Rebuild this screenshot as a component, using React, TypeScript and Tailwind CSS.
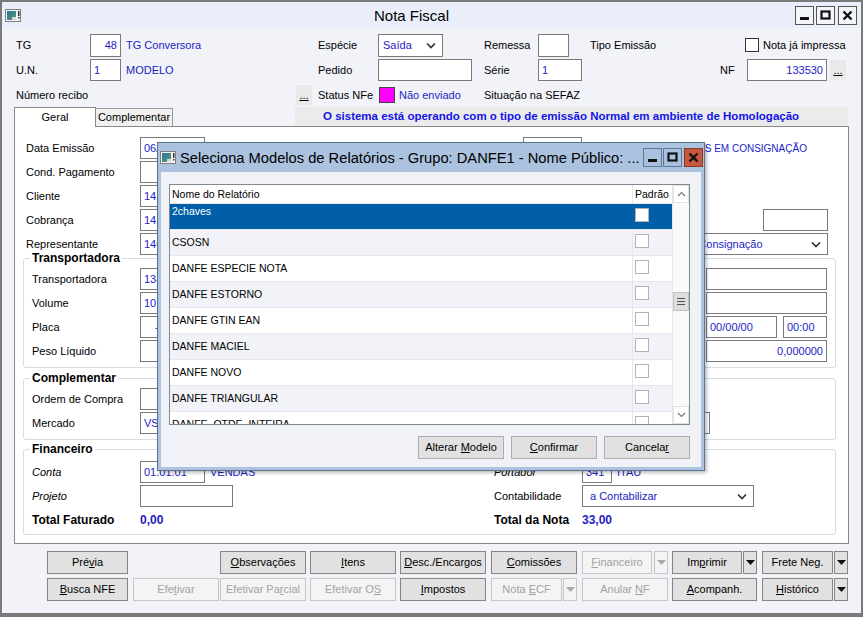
import React from "react";

type P = { w: string; h?: string; right?: boolean; className?: string; children?: React.ReactNode };

function Box({ w, h = "h-[22px]", right, className = "", children }: P) {
  return (
    <div
      className={`${w} ${h} shrink-0 border border-[#7a7a7a] bg-white flex items-center px-[3px] text-[#1d1dc4] overflow-hidden whitespace-nowrap ${
        right ? "justify-end" : ""
      } ${className}`}
    >
      {children}
    </div>
  );
}

function Chev() {
  return (
    <svg width="10" height="7" viewBox="0 0 10 7" className="shrink-0">
      <path d="M1 1.5 L5 5.5 L9 1.5" fill="none" stroke="#333" strokeWidth="1.7" />
    </svg>
  );
}

function Sel({ w, h = "h-[22px]", className = "", children }: P) {
  return (
    <div
      className={`${w} ${h} shrink-0 border border-[#7a7a7a] bg-white flex items-center pr-[6px] text-[#1d1dc4] overflow-hidden whitespace-nowrap ${className}`}
    >
      <span className="flex-1 overflow-hidden">{children}</span>
      <Chev />
    </div>
  );
}

function L({ w, className = "", children }: P) {
  return <div className={`${w} shrink-0 whitespace-nowrap ${className}`}>{children}</div>;
}

function WinIcon({ id }: { id: string }) {
  return (
    <svg width="16" height="13" viewBox="0 0 16 13" className="shrink-0">
      <defs>
        <linearGradient id={id} x1="0" y1="0" x2="1" y2="1">
          <stop offset="0" stopColor="#2f6f9f" />
          <stop offset="1" stopColor="#4fa36a" />
        </linearGradient>
      </defs>
      <rect x="0.5" y="0.5" width="15" height="12" fill="#f4f4f4" stroke="#7f7f7f" />
      <rect x="2" y="2" width="9" height="9" fill={`url(#${id})`} />
      <rect x="7" y="8" width="4" height="3" fill="#d8d8d8" />
      <rect x="13" y="2" width="1.5" height="5" fill="#333" />
      <rect x="13" y="8" width="1.5" height="1.5" fill="#333" />
    </svg>
  );
}

function Ctl({ kind, tone = "main" }: { kind: "min" | "max" | "close"; tone?: "main" | "dlg" | "red" }) {
  const cls =
    tone === "main"
      ? "bg-[#f3f5f9] border-[#555]"
      : tone === "dlg"
      ? "bg-[#a9c1de] border-[#5f7898]"
      : "bg-[#c9573f] border-[#8a3a2a]";
  return (
    <div className={`w-[19px] h-[19px] border ${cls} flex items-center justify-center`}>
      <svg width="17" height="17" viewBox="0 0 17 17">
        {kind === "min" && <rect x="4" y="10" width="9" height="3" fill="#111" />}
        {kind === "max" && <rect x="4.5" y="4.5" width="8" height="7" fill="none" stroke="#111" strokeWidth="2.2" />}
        {kind === "close" && (
          <path d="M4.5 4.5 L12.5 12.5 M12.5 4.5 L4.5 12.5" stroke="#111" strokeWidth="2.4" />
        )}
      </svg>
    </div>
  );
}

function Btn({
  className = "",
  disabled,
  children,
}: {
  className?: string;
  disabled?: boolean;
  children: React.ReactNode;
}) {
  return (
    <div
      className={`h-[23px] shrink-0 border flex items-center justify-center whitespace-nowrap ${
        disabled ? "bg-[#f4f4f4] border-[#c6c6c6] text-[#a2a2a2]" : "bg-[#e1e1e1] border-[#858585] text-black"
      } ${className}`}
    >
      {children}
    </div>
  );
}

function Arrow({ className = "", disabled }: { className?: string; disabled?: boolean }) {
  return (
    <div
      className={`w-[14px] h-[23px] shrink-0 border flex items-center justify-center ${
        disabled ? "bg-[#f4f4f4] border-[#c6c6c6]" : "bg-[#e1e1e1] border-[#858585]"
      } ${className}`}
    >
      <svg width="9" height="5" viewBox="0 0 9 5">
        <path d="M0 0 H9 L4.5 5 Z" fill={disabled ? "#a8a8a8" : "#111"} />
      </svg>
    </div>
  );
}

function Dots({ className = "" }: { className?: string }) {
  return (
    <div className={`w-[16px] h-[20px] shrink-0 bg-[#e9e9e9] flex items-center justify-center underline ${className}`}>
      ...
    </div>
  );
}

const rows = [
  "2chaves",
  "CSOSN",
  "DANFE ESPECIE NOTA",
  "DANFE ESTORNO",
  "DANFE GTIN EAN",
  "DANFE MACIEL",
  "DANFE NOVO",
  "DANFE TRIANGULAR",
  "DANFE_QTDE_INTEIRA",
];

function Dialog() {
  return (
    <div className="absolute left-[155px] top-[140px] w-[548px] h-[329px] border border-[#5a7394] bg-[#abc3df] shadow-[2px_2px_3px_rgba(0,0,0,0.25)] flex flex-col">
      <div className="h-[29px] shrink-0 flex items-center pl-[2px] pr-[1px]">
        <WinIcon id="g2" />
        <span className="ml-[4px] text-[14.7px] leading-[18px] text-black whitespace-nowrap">
          Seleciona Modelos de Relatórios - Grupo: DANFE1 - Nome Público: ...
        </span>
        <div className="ml-auto flex gap-[1px] shrink-0">
          <Ctl kind="min" tone="dlg" />
          <Ctl kind="max" tone="dlg" />
          <div className="ml-[1px]">
            <Ctl kind="close" tone="red" />
          </div>
        </div>
      </div>
      <div className="flex-1 mx-[3px] mb-[3px] bg-[#f0f2f7] pl-[8px] pt-[12px]">
        <div className="w-[521px] h-[241px] border border-[#828790] bg-white flex">
          <div className="flex-1 flex flex-col overflow-hidden">
            <div className="h-[19px] shrink-0 flex border-b border-[#e4e6ea] text-[10.5px]">
              <div className="flex-1 pl-[2px] flex items-center">Nome do Relatório</div>
              <div className="w-[40px] border-l border-[#e4e6ea] pl-[2px] flex items-center">Padrão</div>
            </div>
            {rows.map((r, i) => {
              const sel = i === 0;
              const bg = sel ? "bg-[#005fa8] text-white" : i % 2 === 1 ? "bg-[#f1f3f8]" : "bg-white";
              return (
                <div key={r} className={`h-[26px] shrink-0 flex border-b border-[#e4e6ec] text-[10.5px] ${bg}`}>
                  <div className={`flex-1 pl-[2px] flex ${sel ? "items-start pt-[1px]" : "items-center"}`}>{r}</div>
                  <div className={`w-[40px] pl-[2px] pt-[4px] border-l ${sel ? "border-[#005fa8]" : "border-[#e4e6ec]"}`}>
                    <div className="w-[14px] h-[14px] border border-[#b3b3b3] bg-white" />
                  </div>
                </div>
              );
            })}
          </div>
          <div className="w-[17px] shrink-0 flex flex-col bg-[#fafafa] border-l border-[#e6e6e6]">
            <div className="h-[18px] shrink-0 border border-[#e2e2e2] bg-white flex items-center justify-center">
              <svg width="9" height="6" viewBox="0 0 9 6">
                <path d="M1 5 L4.5 1.5 L8 5" fill="none" stroke="#777" strokeWidth="1.2" />
              </svg>
            </div>
            <div className="flex-1">
              <div className="mt-[89px] h-[19px] bg-[#dedede] border border-[#c2c2c2] flex flex-col items-center justify-center gap-[2px]">
                <div className="w-[8px] h-px bg-[#555]" />
                <div className="w-[8px] h-px bg-[#555]" />
                <div className="w-[8px] h-px bg-[#555]" />
              </div>
            </div>
            <div className="h-[18px] shrink-0 border border-[#e2e2e2] bg-white flex items-center justify-center">
              <svg width="9" height="6" viewBox="0 0 9 6">
                <path d="M1 1 L4.5 4.5 L8 1" fill="none" stroke="#777" strokeWidth="1.2" />
              </svg>
            </div>
          </div>
        </div>
        <div className="flex justify-end gap-[7px] mt-[11px] pr-[11px] text-[11px]">
          <div className="w-[86px] h-[23px] bg-[#e1e1e1] border border-[#adadad] flex items-center justify-center">
            Alterar&nbsp;<u>M</u>odelo
          </div>
          <div className="w-[86px] h-[23px] bg-[#e1e1e1] border border-[#adadad] flex items-center justify-center">
            <u>C</u>onfirmar
          </div>
          <div className="w-[86px] h-[23px] bg-[#e1e1e1] border border-[#adadad] flex items-center justify-center">
            Cancela<u>r</u>
          </div>
        </div>
      </div>
    </div>
  );
}

export default function App() {
  return (
    <div className="w-[863px] h-[617px] relative overflow-hidden bg-[#f1f3f8] border-2 border-b-4 border-[#7a7a7a] text-[11px] text-black font-['Liberation_Sans',Arial,sans-serif] leading-[13px]">
      {/* title bar */}
      <div className="h-[26px] bg-[#e9eefa] flex items-center">
        <div className="ml-[3px]">
          <WinIcon id="g1" />
        </div>
        <span className="ml-[353px] text-[15px]">Nota Fiscal</span>
        <div className="ml-auto mr-[4px] flex gap-[2px]">
          <Ctl kind="min" />
          <Ctl kind="max" />
          <div className="ml-[1px]">
            <Ctl kind="close" />
          </div>
        </div>
      </div>

      {/* header fields */}
      <div className="pl-[14px] pt-[5px]">
        <div className="flex items-center h-[24px]">
          <L w="w-[74px]">TG</L>
          <Box w="w-[31px]" h="h-[23px]" right>48</Box>
          <L w="w-[192px]" className="ml-[5px] text-[#1d1dc4]">TG Conversora</L>
          <L w="w-[60px]">Espécie</L>
          <Sel w="w-[65px]" h="h-[23px]" className="pl-[4px]">Saída</Sel>
          <L w="w-[54px]" className="ml-[41px]">Remessa</L>
          <Box w="w-[31px]" h="h-[23px]" />
          <L w="w-[155px]" className="ml-[21px]">Tipo Emissão</L>
          <div className="w-[14px] h-[14px] border border-[#333] bg-white" />
          <span className="ml-[4px]">Nota já impressa</span>
        </div>
        <div className="flex items-center h-[24px] mt-[1px]">
          <L w="w-[74px]">U.N.</L>
          <Box w="w-[31px]">1</Box>
          <L w="w-[192px]" className="ml-[5px] text-[#1d1dc4]">MODELO</L>
          <L w="w-[60px]">Pedido</L>
          <Box w="w-[94px]" />
          <L w="w-[54px]" className="ml-[12px]">Série</L>
          <Box w="w-[44px]">1</Box>
          <L w="w-[27px]" className="ml-[138px]">NF</L>
          <Box w="w-[80px]" right>133530</Box>
          <Dots className="ml-[3px]" />
        </div>
        <div className="flex items-center h-[24px] mt-[1px]">
          <L w="w-[280px]">Número recibo</L>
          <Dots />
          <L w="w-[61px]" className="ml-[6px]">Status NFe</L>
          <div className="w-[16px] h-[16px] shrink-0 bg-[#ff00ff] border border-[#444]" />
          <L w="w-[85px]" className="ml-[4px] text-[#1d1dc4]">Não enviado</L>
          <span>Situação na SEFAZ</span>
        </div>
      </div>

      {/* tabs + panel */}
      <div className="pl-[12px]">
        <div className="flex items-end h-[19px]">
          <div className="w-[82px] h-[20px] -mb-px relative z-10 border border-b-0 border-[#898989] bg-white flex items-center justify-center">
            Geral
          </div>
          <div className="w-[77px] h-[18px] border border-l-0 border-b-0 border-[#9a9a9a] bg-[#f0f0f0] flex items-center justify-center">
            Complementar
          </div>
          <div className="w-[122px]" />
          <div className="w-[553px] h-[19px] bg-[#ebebeb] pl-[28px] flex items-center font-bold text-[11.5px] text-[#1414e6] whitespace-nowrap">
            O sistema está operando com o tipo de emissão Normal em ambiente de Homologação
          </div>
        </div>

        <div className="w-[835px] h-[418px] border border-[#898989] bg-white pt-[10px]">
          <div className="flex items-center h-[22px] pl-[11px] pr-[20px]">
            <L w="w-[114px]">Data Emissão</L>
            <Box w="w-[65px]">06/06/17</Box>
            <L w="w-[118px]" className="ml-[200px]">Tipo de Operação</L>
            <Box w="w-[59px]">511.25</Box>
            <span className="ml-[6px] text-[10px] text-[#1d1dc4] whitespace-nowrap">SAIDA DE MERCADORIAS EM CONSIGNAÇÃO</span>
          </div>
          <div className="flex items-center h-[22px] pl-[11px] pr-[20px] mt-[2px]">
            <L w="w-[114px]">Cond. Pagamento</L>
            <Box w="w-[60px]" />
          </div>
          <div className="flex items-center h-[22px] pl-[11px] pr-[20px] mt-[2px]">
            <L w="w-[114px]">Cliente</L>
            <Box w="w-[60px]">1423</Box>
          </div>
          <div className="flex items-center h-[22px] pl-[11px] pr-[20px] mt-[2px]">
            <L w="w-[114px]">Cobrança</L>
            <Box w="w-[60px]">1423</Box>
            <Box w="w-[65px]" className="ml-auto" />
          </div>
          <div className="flex items-center h-[22px] pl-[11px] pr-[20px] mt-[2px]">
            <L w="w-[114px]">Representante</L>
            <Box w="w-[60px]">1460</Box>
            <Sel w="w-[251px]" className="ml-auto pl-[6px]">Remessa p/ Venda em Consignação</Sel>
          </div>

          <fieldset className="ml-[8px] -mt-[4px] w-[813px] border border-[#d6dce5] rounded-[3px] pb-[5px]">
            <legend className="ml-[6px] px-[2px] font-bold text-[12px] leading-[14px]">Transportadora</legend>
            <div className="flex items-center h-[22px] pl-[8px] pr-[8px] mt-[3px]">
              <L w="w-[108px]">Transportadora</L>
              <Box w="w-[60px]">1343</Box>
              <Box w="w-[121px]" className="ml-auto" />
            </div>
            <div className="flex items-center h-[22px] pl-[8px] pr-[8px] mt-[2px]">
              <L w="w-[108px]">Volume</L>
              <Box w="w-[60px]">10,00</Box>
              <Box w="w-[121px]" className="ml-auto" />
            </div>
            <div className="flex items-center h-[22px] pl-[8px] pr-[8px] mt-[2px]">
              <L w="w-[108px]">Placa</L>
              <Box w="w-[60px]" className="pl-[14px]">-</Box>
              <Box w="w-[71px]" className="ml-auto">00/00/00</Box>
              <Box w="w-[44px]" className="ml-[6px]">00:00</Box>
            </div>
            <div className="flex items-center h-[22px] pl-[8px] pr-[8px] mt-[2px]">
              <L w="w-[108px]">Peso Líquido</L>
              <Box w="w-[60px]" />
              <Box w="w-[121px]" className="ml-auto" right>0,000000</Box>
            </div>
          </fieldset>

          <fieldset className="ml-[8px] mt-[3px] w-[813px] border border-[#d6dce5] rounded-[3px] pb-[5px]">
            <legend className="ml-[6px] px-[2px] font-bold text-[12px] leading-[14px]">Complementar</legend>
            <div className="flex items-center h-[22px] pl-[8px] pr-[8px] mt-[3px]">
              <L w="w-[108px]">Ordem de Compra</L>
              <Box w="w-[60px]" />
            </div>
            <div className="flex items-center h-[22px] pl-[8px] pr-[8px] mt-[2px]">
              <L w="w-[108px]">Mercado</L>
              <Box w="w-[60px]">VS</Box>
              <Box w="w-[128px]" className="ml-[382px]" />
            </div>
          </fieldset>

          <fieldset className="ml-[8px] mt-[2px] w-[813px] border border-[#d6dce5] rounded-[3px] pb-[3px]">
            <legend className="ml-[6px] px-[2px] font-bold text-[12px] leading-[14px]">Financeiro</legend>
            <div className="flex items-center h-[22px] pl-[8px] pr-[8px] mt-[5px]">
              <L w="w-[108px]" className="italic">Conta</L>
              <Box w="w-[65px]">01.01.01</Box>
              <L w="w-[284px]" className="ml-[5px] text-[#1d1dc4]">VENDAS</L>
              <L w="w-[88px]" className="italic">Portador</L>
              <Box w="w-[30px]">341</Box>
              <span className="ml-[5px] text-[#1d1dc4]">ITAU</span>
            </div>
            <div className="flex items-center h-[22px] pl-[8px] pr-[8px] mt-[2px]">
              <L w="w-[108px]" className="italic">Projeto</L>
              <Box w="w-[93px]" />
              <L w="w-[88px]" className="ml-[261px]">Contabilidade</L>
              <Sel w="w-[172px]" className="pl-[7px]">a Contabilizar</Sel>
            </div>
            <div className="flex items-center h-[22px] pl-[8px] pr-[8px] mt-[2px] font-bold text-[12px]">
              <L w="w-[108px]">Total Faturado</L>
              <L w="w-[354px]" className="text-[#1d1dc4]">0,00</L>
              <L w="w-[88px]">Total da Nota</L>
              <span className="text-[#1d1dc4]">33,00</span>
            </div>
          </fieldset>
        </div>
      </div>

      {/* bottom buttons */}
      <div className="pl-[45px] pt-[7px]">
        <div className="flex">
          <Btn className="w-[81px]">Pré<u>v</u>ia</Btn>
          <Btn className="w-[86px] ml-[92px]"><u>O</u>bservações</Btn>
          <Btn className="w-[86px] ml-[4px]"><u>I</u>tens</Btn>
          <Btn className="w-[86px] ml-[4px]"><u>D</u>esc./Encargos</Btn>
          <Btn className="w-[86px] ml-[5px]"><u>C</u>omissões</Btn>
          <Btn className="w-[70px] ml-[5px]" disabled><u>F</u>inanceiro</Btn>
          <Arrow className="ml-[2px]" disabled />
          <Btn className="w-[70px] ml-[4px]">Im<u>p</u>rimir</Btn>
          <Arrow className="ml-[1px]" />
          <Btn className="w-[71px] ml-[5px]">Frete Neg.</Btn>
          <Arrow className="ml-[1px]" />
        </div>
        <div className="flex mt-[4px]">
          <Btn className="w-[81px]"><u>B</u>usca NFE</Btn>
          <Btn className="w-[86px] ml-[5px]" disabled>Efe<u>t</u>ivar</Btn>
          <Btn className="w-[86px] ml-[1px]" disabled>Efetivar Pa<u>r</u>cial</Btn>
          <Btn className="w-[86px] ml-[4px]" disabled>Efetivar O<u>S</u></Btn>
          <Btn className="w-[86px] ml-[4px]"><u>I</u>mpostos</Btn>
          <Btn className="w-[71px] ml-[5px]" disabled>Nota&nbsp;<u>E</u>CF</Btn>
          <Arrow className="ml-[1px]" disabled />
          <Btn className="w-[86px] ml-[5px]" disabled>Anular&nbsp;<u>N</u>F</Btn>
          <Btn className="w-[85px] ml-[4px]"><u>A</u>companh.</Btn>
          <Btn className="w-[71px] ml-[5px]"><u>H</u>istórico</Btn>
          <Arrow className="ml-[1px]" />
        </div>
      </div>

      <Dialog />
    </div>
  );
}
